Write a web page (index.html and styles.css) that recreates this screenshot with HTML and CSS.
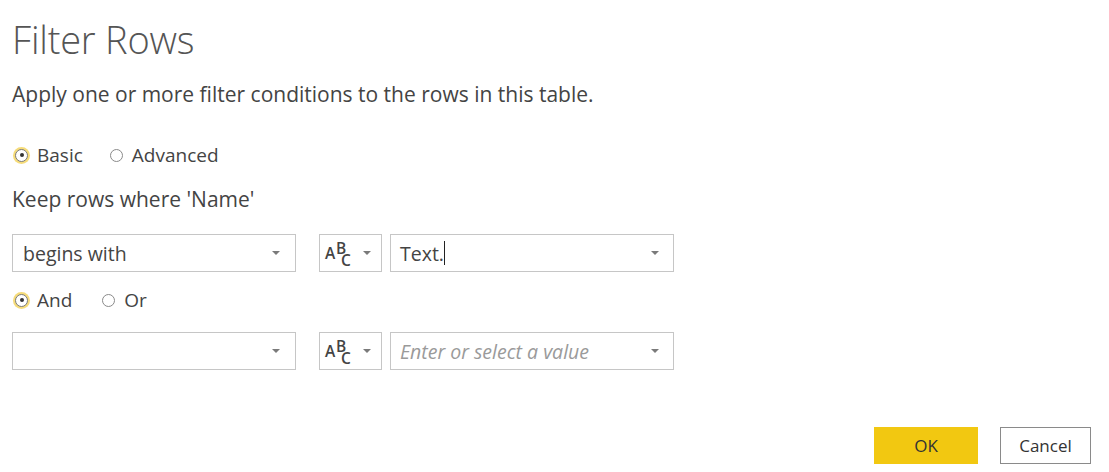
FILE: index.html
```html
<!DOCTYPE html>
<html lang="en">
<head>
<meta charset="utf-8">
<title>Filter Rows</title>
<link rel="stylesheet" href="styles.css">
</head>
<body>
<div class="dialog">
  <h1 class="title">Filter Rows</h1>
  <p class="desc">Apply one or more filter conditions to the rows in this table.</p>

  <div class="radios">
    <label class="radio on"><span class="dot"></span>Basic</label>
    <label class="radio"><span class="dot"></span>Advanced</label>
  </div>

  <p class="label">Keep rows where 'Name'</p>

  <div class="cond-row">
    <div class="select op"><span class="val">begins with</span><span class="caret"></span></div>
    <div class="select type"><span class="abc"><span class="a">A</span><span class="b">B</span><span class="c">C</span></span><span class="caret"></span></div>
    <div class="select value"><span class="val">Text.<span class="cursor"></span></span><span class="caret"></span></div>
  </div>

  <div class="radios logic">
    <label class="radio on"><span class="dot"></span>And</label>
    <label class="radio"><span class="dot"></span>Or</label>
  </div>

  <div class="cond-row second">
    <div class="select op"><span class="val"></span><span class="caret"></span></div>
    <div class="select type"><span class="abc"><span class="a">A</span><span class="b">B</span><span class="c">C</span></span><span class="caret"></span></div>
    <div class="select value"><span class="val placeholder">Enter or select a value</span><span class="caret"></span></div>
  </div>

  <div class="footer">
    <button class="btn primary">OK</button>
    <button class="btn">Cancel</button>
  </div>
</div>
</body>
</html>
```

FILE: styles.css
```css
html, body {
  margin: 0;
  padding: 0;
  background: #ffffff;
}

body {
  font-family: "Open Sans", "Noto Sans", "Liberation Sans", sans-serif;
  color: #444444;
}

.dialog {
  padding: 15px 18px 0 12px;
  display: flex;
  flex-direction: column;
}

.title {
  margin: 0;
  font-size: 38px;
  line-height: 48px;
  font-weight: 300;
  color: #555555;
  letter-spacing: -0.2px;
}

.desc {
  margin: 17px 0 0 0;
  font-size: 21px;
  line-height: 28px;
  color: #444444;
}

.radios {
  margin-top: 35px;
  height: 24px;
  display: flex;
  align-items: center;
  font-size: 19px;
  color: #444444;
}

.radio {
  display: flex;
  align-items: center;
  margin-right: 24px;
}

.radios.logic .radio {
  margin-right: 27px;
}

.dot {
  width: 11px;
  height: 11px;
  border: 1.5px solid #8a8a8a;
  border-radius: 50%;
  margin: 0 9px 0 3px;
  box-sizing: content-box;
  background: #ffffff;
  position: relative;
}

.radio.on .dot {
  border-color: #7a7a7a;
  box-shadow: 0 0 0 2px #f6dc7a;
}

.radio.on .dot::after {
  content: "";
  position: absolute;
  left: 3.5px;
  top: 3.5px;
  width: 4px;
  height: 4px;
  border-radius: 50%;
  background: #333333;
}

.label {
  margin: 18px 0 0 0;
  font-size: 21px;
  line-height: 28px;
}

.cond-row {
  margin-top: 21px;
  display: flex;
  height: 38px;
}

.radios.logic {
  margin-top: 16px;
}

.cond-row.second {
  margin-top: 20px;
}

.select {
  box-sizing: border-box;
  height: 38px;
  border: 1px solid #c6c6c6;
  display: flex;
  align-items: center;
  justify-content: space-between;
  background: #ffffff;
}

.select.op {
  width: 284px;
  padding: 0 15px 0 10px;
}

.select.type {
  width: 63px;
  margin-left: 23px;
  padding: 0 10px 0 3px;
}

.select.value {
  width: 284px;
  margin-left: 8px;
  padding: 0 14px 0 9px;
}

.val {
  font-size: 19.5px;
  color: #444444;
  display: flex;
  align-items: center;
}

.placeholder {
  font-style: italic;
  color: #9a9a9a;
}

.cursor {
  display: inline-block;
  width: 1px;
  height: 24px;
  background: #222222;
}

.caret {
  width: 0;
  height: 0;
  border-left: 4px solid transparent;
  border-right: 4px solid transparent;
  border-top: 4px solid #7a7a7a;
}

.abc {
  position: relative;
  width: 30px;
  height: 30px;
  font-size: 15.5px;
  font-weight: 600;
  color: #444444;
}

.abc span {
  position: absolute;
  line-height: 11px;
}

.abc .a { left: 2px; top: 10px; }
.abc .b { left: 13px; top: 5px; }
.abc .c { left: 18px; top: 17px; }

.footer {
  margin-top: 57px;
  display: flex;
  justify-content: flex-end;
  gap: 22px;
}

.btn {
  font-family: "Open Sans", "Noto Sans", "Liberation Sans", sans-serif;
  font-size: 17px;
  height: 37px;
  width: 91px;
  border: 1px solid #8a8a8a;
  background: #ffffff;
  color: #333333;
  padding: 0;
}

.btn.primary {
  width: 104px;
  background: #f2c811;
  border-color: #f2c811;
}
```
